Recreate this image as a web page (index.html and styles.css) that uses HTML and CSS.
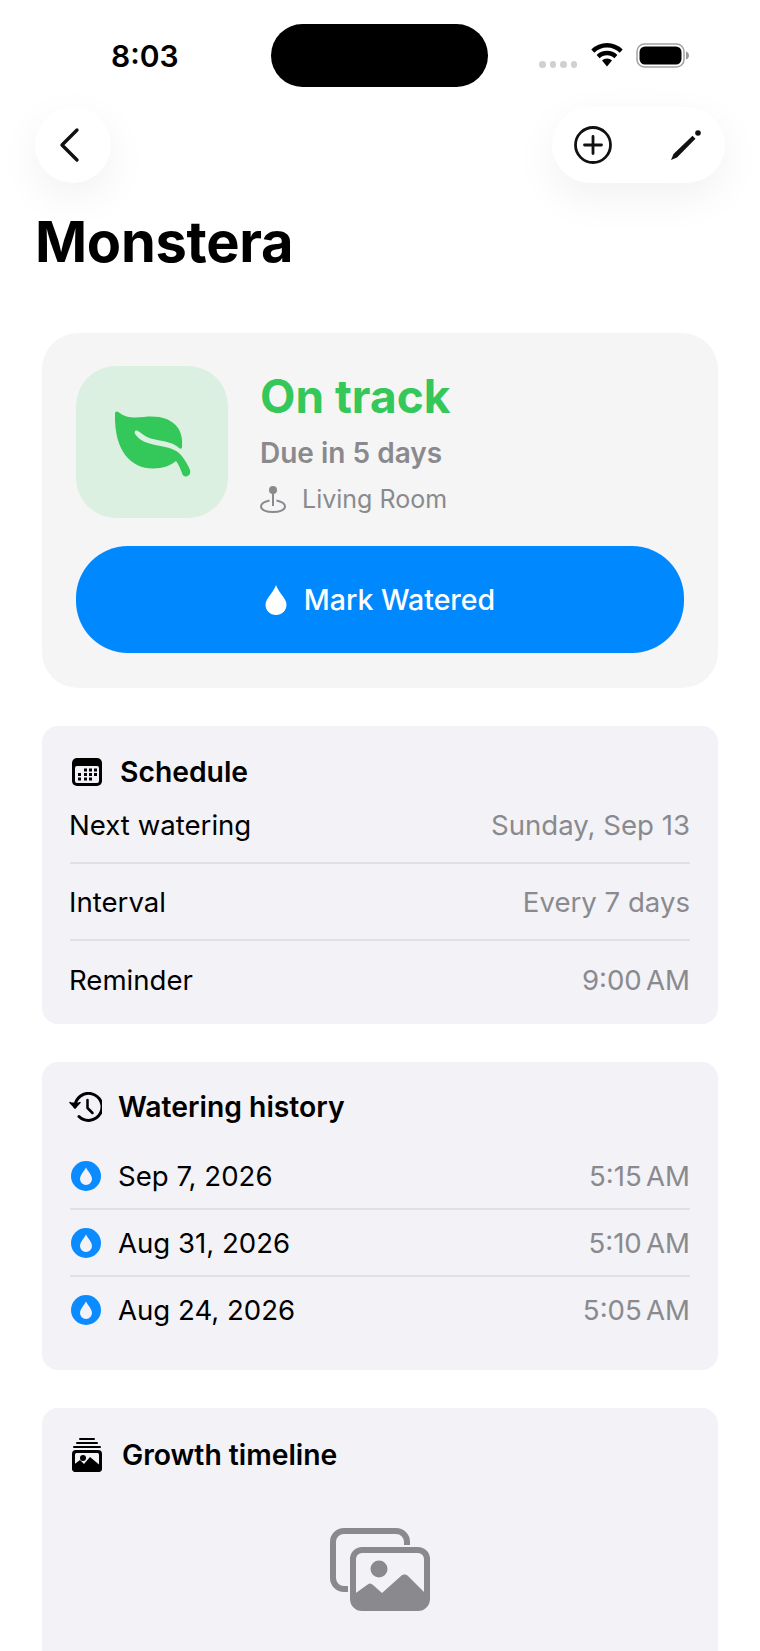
FILE: index.html
```html
<!DOCTYPE html>
<html lang="en">
<head>
<meta charset="utf-8">
<title>Monstera</title>
<link rel="stylesheet" href="styles.css">
</head>
<body>
<div class="screen">
  <header class="status">
    <span class="time">8:03</span>
    <div class="island"></div>
    <div class="status-right">
      <div class="dots"><i></i><i></i><i></i><i></i></div>
      <svg class="wifi" width="34" height="25" viewBox="0 0 34 25"><path d="M17 4.500c5 0 9.400 2 12.700 5.200l3-3.200A22.600 22.600 0 0 0 17 0 22.600 22.600 0 0 0 1.300 6.500l3 3.200C7.600 6.500 12 4.500 17 4.500z"/><path d="M17 12.200c2.900 0 5.500 1.100 7.400 3l3-3.200A15 15 0 0 0 17 7.800 15 15 0 0 0 6.600 12l3 3.200c1.900-1.900 4.500-3 7.400-3z"/><path d="M17 15.500c-1.900 0-3.700.8-5 2L17 23.500l5-6c-1.300-1.200-3.100-2-5-2z"/></svg>
      <svg class="battery" width="54" height="25" viewBox="0 0 54 25"><rect x="1" y="1" width="47" height="23" rx="7.500" fill="#fff" stroke="#a2a2a2" stroke-width="1.500"/><rect x="3.500" y="3.500" width="42" height="18" rx="5.500"/><path d="M50 8.500c1.800.5 3 2.200 3 4s-1.200 3.500-3 4z" fill="#9a9a9a"/></svg>
    </div>
  </header>

  <nav class="toolbar">
    <button class="glass back" aria-label="Back">
      <svg width="24" height="36" viewBox="0 0 24 36" fill="none" stroke="#111" stroke-width="3.400" stroke-linecap="round" stroke-linejoin="round"><path d="M19 3 4 18l15 15"/></svg>
    </button>
    <div class="glass actions">
      <svg width="40" height="40" viewBox="0 0 40 40" fill="none" stroke="#111" stroke-width="2.800" stroke-linecap="round"><circle cx="20" cy="20" r="17.500"/><path d="M20 11.500v17M11.500 20h17"/></svg>
      <svg width="32" height="32" viewBox="0 0 32 32" fill="#111"><path d="M1 31 3.500 25 22.500 6.800l3 3L7 28.500z"/><circle cx="28" cy="4" r="2.800"/></svg>
    </div>
  </nav>

  <h1 class="title">Monstera</h1>

  <main class="content">
    <section class="hero">
      <div class="hero-top">
        <div class="leaf-tile">
          <svg width="78" height="67" viewBox="0 0 78 67"><path fill="#34c759" d="M1 3C1 0 3 0 5 1.500 12 7 20 7 30 6 44 4.500 57 7 64 17c4 6 4.500 13 4 19-.1 2-1.500 2-3 1-5-5-12-6-19-7.500-8-1.500-14-3-19-7.500l-3-2c-2.500-1.500-4.500 1-2.500 3.500C26 30 33 32.500 44 34.500 54 36.500 62 38 67 44c4 5 7 10 9 15 1 4-1 6-4 6.500-2.500 0-3.500-1.500-4-3.500-2-5-3.500-9-6-12-5 4.500-13 7.500-23 7.500C17 57.500 0 40 1 3z"/></svg>
        </div>
        <div class="hero-text">
          <div class="state">On track</div>
          <div class="due">Due in 5 days</div>
          <div class="place">
            <svg width="26" height="28" viewBox="0 0 26 28" fill="none" stroke="#8a8a8e" stroke-width="2"><circle cx="13" cy="5" r="4" fill="#8a8a8e" stroke="none"/><path d="M13 8v13"/><path d="M9.500 15.500C4.500 16.500 1 18.500 1 21.500 1 25 6.500 27 13 27s12-2 12-5.500c0-3-3.500-5-8.500-6"/></svg>
            <span>Living Room</span>
          </div>
        </div>
      </div>
      <button class="water">
        <svg width="22" height="30" viewBox="0 0 22 30" fill="#fff"><path d="M11 0c1 3 3 6 5.500 9.500C19 13 21.500 16 21.500 19.500 21.500 25.500 17 30 11 30S.5 25.500.5 19.500C.5 16 3 13 5.500 9.500 8 6 10 3 11 0z"/></svg>
        <span>Mark Watered</span>
      </button>
    </section>

    <section class="panel schedule">
      <h2 class="panel-head">
        <svg width="30" height="28" viewBox="0 0 30 28"><rect width="30" height="28" rx="5"/><rect x="3" y="8" width="24" height="17" rx="2" fill="#f2f2f7"/><g><rect x="12" y="10.500" width="3" height="3"/><rect x="17" y="10.500" width="3" height="3"/><rect x="22" y="10.500" width="3" height="3"/><rect x="6" y="15" width="3" height="3"/><rect x="12" y="15" width="3" height="3"/><rect x="17" y="15" width="3" height="3"/><rect x="22" y="15" width="3" height="3"/><rect x="6" y="19.500" width="3" height="3"/><rect x="12" y="19.500" width="3" height="3"/><rect x="17" y="19.500" width="3" height="3"/></g></svg>
        <span>Schedule</span>
      </h2>
      <div class="row"><span>Next watering</span><span class="value">Sunday, Sep 13</span></div>
      <div class="row"><span>Interval</span><span class="value">Every 7 days</span></div>
      <div class="row"><span>Reminder</span><span class="value clock">9:00 AM</span></div>
    </section>

    <section class="panel history">
      <h2 class="panel-head">
        <svg width="34" height="30" viewBox="0 0 34 30" fill="none" stroke="#000" stroke-width="3" stroke-linecap="round" stroke-linejoin="round"><path d="M7 15A13.500 13.500 0 1 1 11 24.500"/><path d="M2 10.500l5 5.500 5-5.500" fill="#000" stroke-width="1.500"/><path d="M19.500 8v8l5 5" stroke-width="2.500"/></svg>
        <span>Watering history</span>
      </h2>
      <div class="row log"><span class="log-date"><svg class="drop" width="30" height="30" viewBox="0 0 30 30"><circle cx="15" cy="15" r="15" fill="#0a8bff"/><path fill="#f2f2f7" d="M15 6.500c1.500 3.500 6 7.500 6 11.500a6 6 0 0 1-12 0c0-4 4.500-8 6-11.500z"/></svg>Sep 7, 2026</span><span class="value clock">5:15 AM</span></div>
      <div class="row log"><span class="log-date"><svg class="drop" width="30" height="30" viewBox="0 0 30 30"><circle cx="15" cy="15" r="15" fill="#0a8bff"/><path fill="#f2f2f7" d="M15 6.500c1.500 3.500 6 7.500 6 11.500a6 6 0 0 1-12 0c0-4 4.500-8 6-11.500z"/></svg>Aug 31, 2026</span><span class="value clock">5:10 AM</span></div>
      <div class="row log"><span class="log-date"><svg class="drop" width="30" height="30" viewBox="0 0 30 30"><circle cx="15" cy="15" r="15" fill="#0a8bff"/><path fill="#f2f2f7" d="M15 6.500c1.500 3.500 6 7.500 6 11.500a6 6 0 0 1-12 0c0-4 4.500-8 6-11.500z"/></svg>Aug 24, 2026</span><span class="value clock">5:05 AM</span></div>
    </section>

    <section class="panel growth">
      <h2 class="panel-head">
        <svg width="32" height="34" viewBox="0 0 32 34"><rect x="8" y="0" width="16" height="2" rx="1"/><rect x="5" y="4" width="22" height="2" rx="1"/><rect x="2" y="8" width="28" height="2" rx="1"/><rect x="1" y="12" width="30" height="22" rx="4"/><rect x="4" y="15" width="24" height="16" fill="#f2f2f7" rx="1.500"/><circle cx="12" cy="20" r="3"/><path d="M1 28l8-6 4 4 6-7 12 10v1a4 4 0 0 1-4 4H5a4 4 0 0 1-4-4z"/></svg>
        <span>Growth timeline</span>
      </h2>
      <div class="empty">
        <svg width="100" height="83" viewBox="0 0 100 83"><rect x="3" y="3" width="74" height="58" rx="11" fill="none" stroke="#8a8a8e" stroke-width="6"/><rect x="18" y="17" width="82" height="66" rx="11" fill="#f2f2f7"/><rect x="23" y="22" width="74" height="58" rx="9" fill="none" stroke="#8a8a8e" stroke-width="6"/><path fill="#8a8a8e" d="M23 67 37 57c2-2 4-2 6 0l9 8 19-17c2-2 5-2 7 0l19 19v5c0 6-3 9-9 9H32c-6 0-9-3-9-9z"/><circle cx="49" cy="41" r="8.500" fill="#8a8a8e"/></svg>
      </div>
    </section>
  </main>
</div>
</body>
</html>
```
FILE: styles.css
```css
* { box-sizing: border-box; }
html, body { margin: 0; padding: 0; background: #fff; }
body { font-family: Inter, "Liberation Sans", sans-serif; color: #000; }
.screen { width: 760px; height: 1651px; overflow: hidden; background: #fff; }

.status { display: flex; align-items: center; height: 63px; margin-top: 24px; }
.time { width: 271px; padding-left: 111px; font-size: 30px; font-weight: 600; padding-top: 1px; }
.island { width: 217px; height: 63px; border-radius: 32px; background: #000; }
.status-right { display: flex; align-self: flex-start; margin-left: 51px; }
.dots { display: flex; gap: 4px; height: 7px; margin-top: 37px; }
.dots i { display: block; width: 6.500px; height: 7px; border-radius: 50%; background: #d0d0d0; }
.wifi { margin-left: 13px; margin-top: 19px; fill: #000; }
.battery { margin-left: 12px; margin-top: 19px; }

.toolbar { display: flex; justify-content: space-between; padding: 20px 35px 0; }
.glass { height: 76px; border-radius: 38px; background: #fff; border: 0; box-shadow: 0 14px 44px rgba(0, 0, 0, 0.06); display: flex; align-items: center; }
.back { width: 76px; justify-content: center; padding: 0 6px 0 0; }
.actions { width: 173px; justify-content: space-between; padding: 0 23px 0 21px; }

.title { margin: 26px 0 0 35px; font-size: 56px; line-height: 66px; font-weight: 700; letter-spacing: -0.3px; }

.content { padding: 0 42px; margin-top: 58px; display: flex; flex-direction: column; gap: 38px; }
.hero { height: 355px; background: #f5f5f5; border-radius: 36px; padding: 33px 34px; }
.hero-top { display: flex; gap: 32px; }
.leaf-tile { width: 152px; height: 152px; border-radius: 40px; background: #dcf0e2; display: flex; align-items: center; justify-content: center; padding: 4px 0 0 2px; }
.hero-text { display: flex; flex-direction: column; }
.state { font-size: 46px; line-height: 56px; font-weight: 700; color: #34c759; margin-top: 2px; }
.due { font-size: 28px; line-height: 34px; font-weight: 600; color: #8a8a8e; margin-top: 12px; }
.place { display: flex; align-items: center; gap: 16px; font-size: 25px; line-height: 32px; color: #8a8a8e; margin-top: 13px; }
.water { width: 100%; height: 107px; margin-top: 28px; border: 0; border-radius: 52px; background: #0088ff; color: #fff; display: flex; align-items: center; justify-content: center; gap: 17px; font: 500 28.500px Inter, "Liberation Sans", sans-serif; }

.panel { background: #f2f2f7; border-radius: 16px; padding: 0 28px; }
.panel-head { display: flex; align-items: center; margin: 0; font-size: 28.300px; font-weight: 600; line-height: 34px; }
.row { display: flex; justify-content: space-between; align-items: center; height: 77px; font-size: 27.600px; border-bottom: 2px solid #e0e0e5; }
.row:last-child { border-bottom: 0; }
.row > span:first-child { margin-left: -1px; }
.value { color: #8a8a8e; }
.clock { word-spacing: -3.500px; }

.schedule { height: 298px; padding-top: 29px; }
.schedule .panel-head { gap: 18px; margin-bottom: -2px; padding-left: 2px; }
.history { height: 308px; padding-top: 28px; }
.history .panel-head { gap: 16px; margin-bottom: 19px; margin-left: -2px; }
.row.log { height: 67px; padding-top: 1px; }
.row.log:last-child { height: 65px; }
.log-date { display: flex; align-items: center; gap: 17px; padding-left: 2px; }
.growth { height: 400px; padding-top: 30px; }
.growth .panel-head { gap: 19px; padding-left: 1px; }
.empty { display: flex; justify-content: center; margin-top: 56px; }
```
